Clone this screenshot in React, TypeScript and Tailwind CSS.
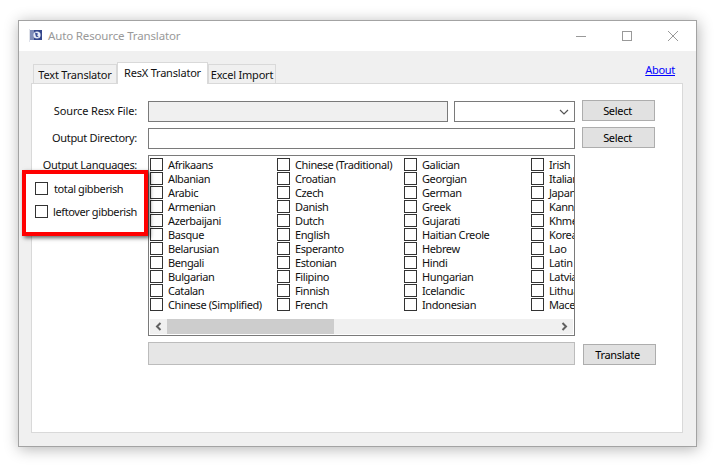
const languages = [
  "Afrikaans", "Albanian", "Arabic", "Armenian", "Azerbaijani", "Basque", "Belarusian", "Bengali", "Bulgarian", "Catalan", "Chinese (Simplified)",
  "Chinese (Traditional)", "Croatian", "Czech", "Danish", "Dutch", "English", "Esperanto", "Estonian", "Filipino", "Finnish", "French",
  "Galician", "Georgian", "German", "Greek", "Gujarati", "Haitian Creole", "Hebrew", "Hindi", "Hungarian", "Icelandic", "Indonesian",
  "Irish", "Italian", "Japanese", "Kannada", "Khmer", "Korean", "Lao", "Latin", "Latvian", "Lithuanian", "Macedonian",
];

function Box() {
  return <span className="block w-[13px] h-[13px] shrink-0 border border-[#333] bg-white" />;
}

function Button({ label, className }: { label: string; className: string }) {
  return (
    <button className={`w-[73px] h-[21px] shrink-0 border border-[#adadad] bg-[#e1e1e1] text-black tracking-[-0.3px] leading-[19px] ${className}`}>
      {label}
    </button>
  );
}

export default function App() {
  return (
    <div className="relative w-[724px] h-[465px] bg-white pt-[20px] pl-[18px] overflow-hidden font-['Noto_Sans',sans-serif] text-[11px] tracking-[-0.4px] text-[#111]">
      {/* window */}
      <div className="w-[679px] h-[427px] flex flex-col border border-[#a3a3a3] bg-[#f0f0f0] shadow-[1px_2px_14px_rgba(0,0,0,0.3)]">
        {/* title bar */}
        <div className="h-[30px] shrink-0 flex items-center bg-white pl-[10px]">
          <svg width="14" height="14" viewBox="0 0 14 14" className="shrink-0">
            <rect x="0" y="0" width="1" height="13" fill="#dfe2ea" />
            <rect x="1" y="1" width="12" height="10" fill="#7f8db8" />
            <rect x="5" y="1" width="8" height="10" fill="#34478c" />
            <circle cx="8" cy="6" r="3.6" fill="#e6ebf6" />
            <path d="M6 3.6l3 .8-.8 2 1.8 1.8-3-.4-.6-2z" fill="#3a4f96" />
          </svg>
          <span className="ml-[5px] text-[11.5px] tracking-[-0.15px] text-[#999] -mt-[1px]">Auto Resource Translator</span>
          <div className="ml-auto flex">
            <div className="w-[46px] h-[30px] flex items-center justify-center">
              <svg width="10" height="10" viewBox="0 0 10 10"><path d="M0 5.5h10" stroke="#999" /></svg>
            </div>
            <div className="w-[46px] h-[30px] flex items-center justify-center">
              <svg width="10" height="10" viewBox="0 0 10 10"><rect x="0.5" y="0.5" width="9" height="9" fill="none" stroke="#999" /></svg>
            </div>
            <div className="w-[46px] h-[30px] flex items-center justify-center">
              <svg width="10" height="10" viewBox="0 0 10 10"><path d="M0 0l10 10M10 0L0 10" stroke="#999" /></svg>
            </div>
          </div>
        </div>

        {/* tabs */}
        <div className="flex items-end h-[32px] shrink-0 pl-[14px] pr-[21px] relative whitespace-nowrap tracking-[-0.2px]">
          <div className="w-[84px] h-[19px] bg-[#f0f0f0] border border-b-0 border-[#d9d9d9] text-center leading-[19px]">Text Translator</div>
          <div className="w-[91px] h-[22px] bg-white border border-b-0 border-[#d9d9d9] text-center leading-[20px] mb-[-1px] z-10">ResX Translator</div>
          <div className="w-[68px] h-[19px] bg-[#f0f0f0] border border-b-0 border-[#d9d9d9] text-center leading-[19px]">Excel Import</div>
          <a className="ml-auto mb-[5px] tracking-[-0.3px] text-[#0000ff] underline">About</a>
        </div>

        {/* tab panel */}
        <div className="w-[652px] h-[350px] ml-[12px] border border-[#d9d9d9] bg-white pt-[17px] flex flex-col">
          <div className="flex items-center h-[21px]">
            <span className="w-[105px] text-right tracking-[-0.15px]">Source Resx File:</span>
            <div className="ml-[11px] w-[300px] h-[21px] border border-[#7a7a7a] bg-[#f0f0f0]" />
            <div className="ml-[6px] w-[121px] h-[21px] border border-[#7a7a7a] bg-white flex items-center justify-end pr-[5px]">
              <svg width="10" height="6" viewBox="0 0 10 6"><path d="M1 1l4 4 4-4" fill="none" stroke="#555" strokeWidth="1.2" /></svg>
            </div>
            <div className="ml-[7px] -mt-[2px]"><Button label="Select" className="pr-[2px]" /></div>
          </div>

          <div className="flex items-center h-[21px] mt-[6px]">
            <span className="w-[105px] text-right tracking-[-0.3px]">Output Directory:</span>
            <div className="ml-[11px] w-[427px] h-[21px] border border-[#7a7a7a] bg-white" />
            <div className="ml-[7px] -mt-[2px]"><Button label="Select" className="pr-[2px]" /></div>
          </div>

          <div className="flex items-start mt-[6px]">
            <span className="w-[105px] text-right tracking-[-0.3px] pt-[2px]">Output Languages:</span>
            <div className="ml-[11px] w-[427px] h-[181px] border border-[#7a7a7a] flex flex-col pl-[1px] pt-[1px] overflow-hidden">
              <div className="h-[162px] grid grid-flow-col grid-rows-[repeat(11,14px)] auto-cols-[127px] overflow-hidden">
                {languages.map((name) => (
                  <div key={name} className="flex items-center gap-[5px] whitespace-nowrap">
                    <Box />
                    <span className="pt-[2px]">{name}</span>
                  </div>
                ))}
              </div>
              {/* horizontal scrollbar */}
              <div className="h-[15px] mr-[1px] flex items-stretch bg-[#f0f0f0]">
                <div className="w-[17px] flex items-center justify-center">
                  <svg width="7" height="9" viewBox="0 0 7 9"><path d="M5.5 1L2 4.5 5.5 8" fill="none" stroke="#606060" strokeWidth="2" /></svg>
                </div>
                <div className="w-[167px] bg-[#cdcdcd]" />
                <div className="ml-auto w-[17px] flex items-center justify-center">
                  <svg width="7" height="9" viewBox="0 0 7 9"><path d="M1.5 1L5 4.5 1.5 8" fill="none" stroke="#606060" strokeWidth="2" /></svg>
                </div>
              </div>
            </div>
          </div>

          <div className="flex items-center h-[23px] mt-[6px]">
            <div className="ml-[116px] w-[427px] h-[23px] border border-[#bcbcbc] bg-[#e6e6e6]" />
            <div className="ml-[8px] mt-[1px]"><Button label="Translate" className="pr-[4px] pb-[2px]" /></div>
          </div>
        </div>
      </div>

      {/* red annotation */}
      <div className="absolute left-[22px] top-[170px] w-[126px] h-[66px] border-[4px] border-[#ff0000] bg-white shadow-[2px_2px_4px_rgba(0,0,0,0.6)] flex flex-col gap-[9px] pl-[9px] pt-[7px] whitespace-nowrap">
        <div className="flex items-center gap-[6px] h-[14px]"><Box /><span className="pt-[2px]">total gibberish</span></div>
        <div className="flex items-center gap-[5px] h-[14px]"><Box /><span className="pt-[2px]">leftover gibberish</span></div>
      </div>
    </div>
  );
}
